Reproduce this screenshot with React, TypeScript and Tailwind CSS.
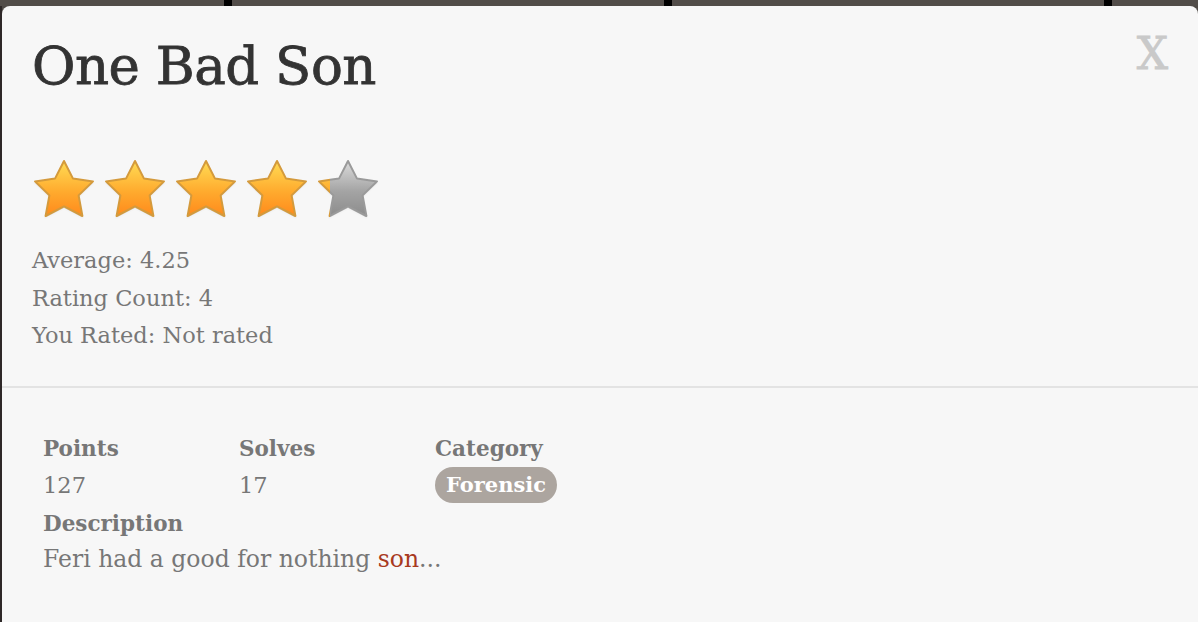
import React from "react";

const FONT = { fontFamily: '"DejaVu Serif", "Liberation Serif", serif' };

const STAR =
  "M32 3 L41 20.6 L61 23.4 L46.6 37.4 L50.4 58 L32 48.4 L13.6 58 L17.4 37.4 L3 23.4 L23 20.6 Z";

function Star({ fill, id }: { fill: number; id: string }) {
  const w = 64 * fill;
  return (
    <svg width="64" height="62" viewBox="0 0 64 62" className="shrink-0">
      <defs>
        <linearGradient id={`g-${id}`} x1="0" y1="0" x2="0" y2="1">
          <stop offset="0" stopColor="#ffdc55" />
          <stop offset="0.55" stopColor="#ffab2e" />
          <stop offset="1" stopColor="#ff8a1c" />
        </linearGradient>
        <linearGradient id={`s-${id}`} x1="0" y1="0" x2="0" y2="1">
          <stop offset="0" stopColor="#dcdcdc" />
          <stop offset="0.55" stopColor="#a4a4a4" />
          <stop offset="1" stopColor="#8c8c8c" />
        </linearGradient>
        <clipPath id={`c-${id}`}>
          <rect x="0" y="0" width={w} height="62" />
        </clipPath>
        <clipPath id={`r-${id}`}>
          <rect x={w} y="0" width={64 - w} height="62" />
        </clipPath>
      </defs>
      <path d={STAR} transform="translate(0 1.5)" fill="#000" opacity="0.12" strokeLinejoin="round" stroke="#000" strokeOpacity="0.08" strokeWidth="3" />
      <g clipPath={`url(#r-${id})`}>
        <path d={STAR} fill={`url(#s-${id})`} stroke="#9a9a9a" strokeWidth="2" strokeLinejoin="round" />
      </g>
      <g clipPath={`url(#c-${id})`}>
        <path d={STAR} fill={`url(#g-${id})`} stroke="#d49a3c" strokeWidth="2" strokeLinejoin="round" />
      </g>
    </svg>
  );
}

export default function App() {
  return (
    <div className="w-[1198px] h-[622px] overflow-hidden bg-[#4f4a46] flex flex-col" style={FONT}>
      <div className="h-[6px] flex shrink-0">
        <div className="w-[224px] bg-[#524d49]" />
        <div className="w-[8px] bg-black" />
        <div className="w-[432px] bg-[#524d49]" />
        <div className="w-[8px] bg-black" />
        <div className="w-[432px] bg-[#524d49]" />
        <div className="w-[8px] bg-black" />
        <div className="flex-1 bg-[#524d49]" />
      </div>
      <div className="flex flex-1 min-h-0">
        <div className="w-[2px] bg-[#2e2828]" />
        <div className="flex-1 bg-[#f7f7f7] rounded-t-[8px] flex flex-col">
          <div className="px-[30px] pt-[20px] pb-[31px] border-b-2 border-[#e3e3e3]">
            <div className="flex justify-between items-start">
              <h1 className="text-[53px] leading-[80px] text-[#333333] tracking-[-0.5px] [-webkit-text-stroke:0.8px_#333333]">One Bad Son</h1>
              <span className="text-[44px] leading-[50px] text-[#c9c9c9] mr-[0px] mt-[3px] [-webkit-text-stroke:0.8px_#c9c9c9]">X</span>
            </div>
            <div className="flex gap-[7px] mt-[52px]">
              <Star fill={1} id="a" />
              <Star fill={1} id="b" />
              <Star fill={1} id="c" />
              <Star fill={1} id="d" />
              <Star fill={0.22} id="e" />
            </div>
            <div className="mt-[22px] text-[22.5px] leading-[37.5px] text-[#777777]">
              <div>Average: 4.25</div>
              <div>Rating Count: 4</div>
              <div>You Rated: Not rated</div>
            </div>
          </div>
          <div className="px-[41px] pt-[42px] text-[22.5px] leading-[37.5px] text-[#777777]">
            <div className="flex">
              <div className="w-[196px]">
                <div className="font-bold text-[21.5px]">Points</div>
                <div>127</div>
              </div>
              <div className="w-[196px]">
                <div className="font-bold text-[21.5px]">Solves</div>
                <div>17</div>
              </div>
              <div>
                <div className="font-bold text-[21.5px]">Category</div>
                <div className="flex">
                  <span className="bg-[#aca59f] text-white font-bold text-[21px] rounded-full h-[36px] px-[11px] leading-[36px]">Forensic</span>
                </div>
              </div>
            </div>
            <div className="font-bold text-[21.5px]">Description</div>
            <div className="text-[23.5px] leading-[35px]">
              Feri had a good for nothing <span className="text-[#a83a1e]">son</span>...
            </div>
          </div>
        </div>
      </div>
    </div>
  );
}
